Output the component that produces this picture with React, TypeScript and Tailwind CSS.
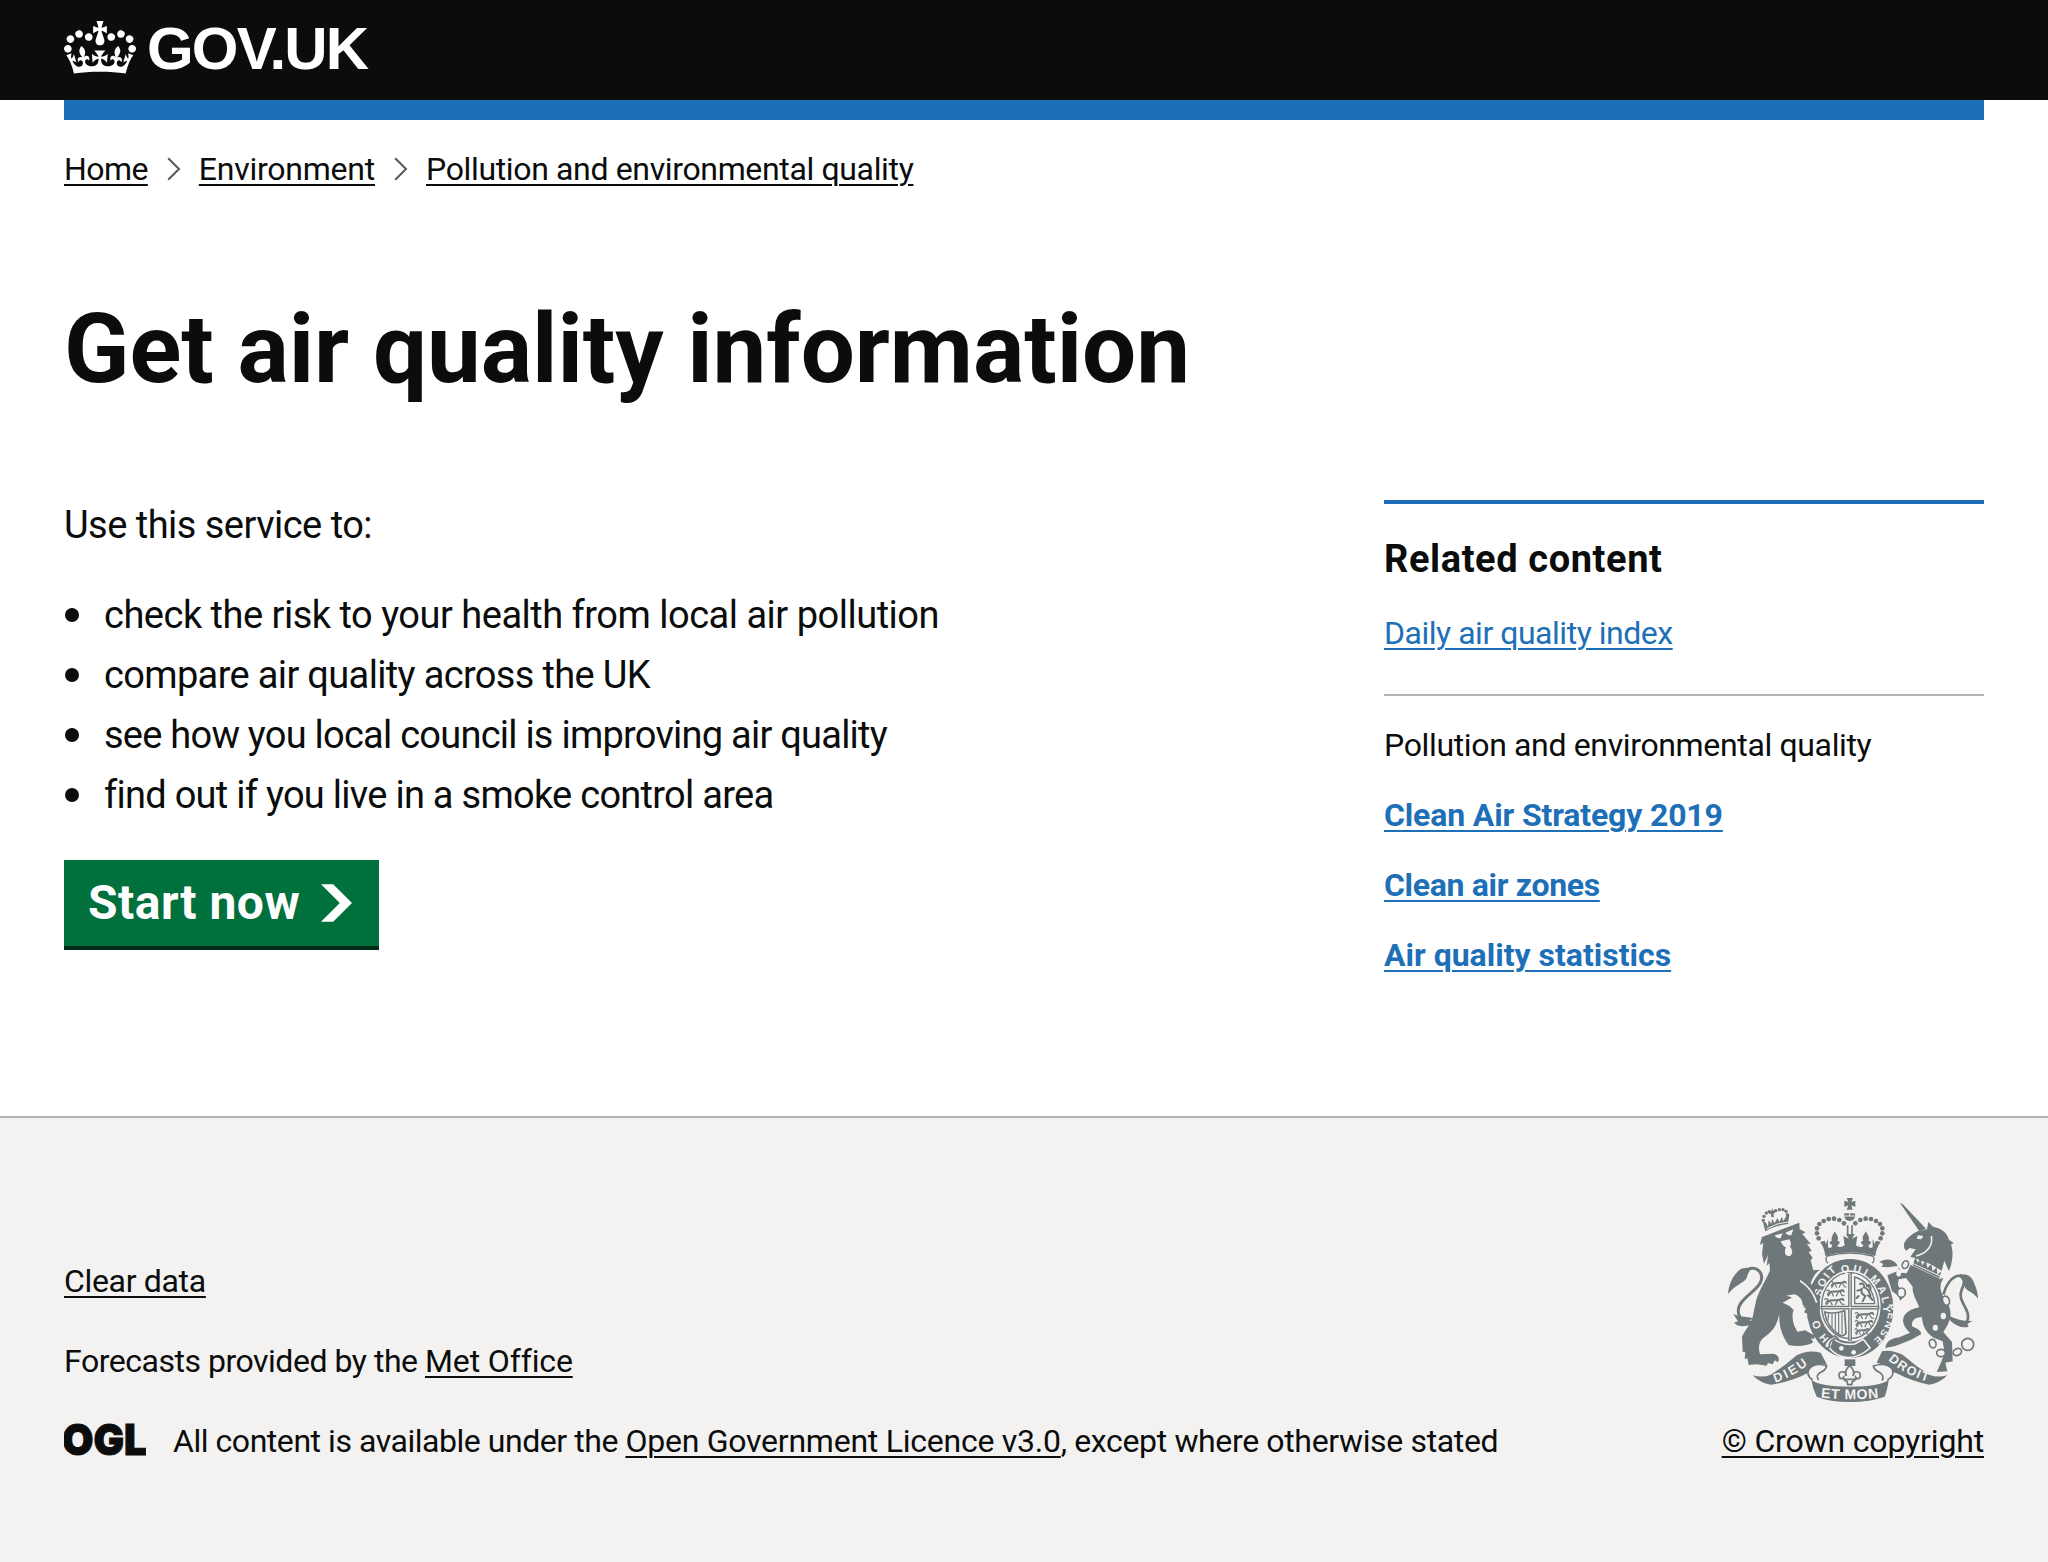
import type { ReactNode } from "react";

const ink = "text-[#0b0c0c]";
const underlined = "underline decoration-2 underline-offset-4";

function Crown() {
  return (
    <svg className="h-[53px] w-[72px] shrink-0" viewBox="0 0 132 97" fill="currentColor" aria-hidden="true">
      <path
        fillRule="evenodd"
        d="M25 30.2c3.5 1.5 7.7-.2 9.1-3.7 1.5-3.6-.2-7.8-3.9-9.2-3.6-1.4-7.6.3-9.1 3.9-1.4 3.5.3 7.5 3.9 9zM9 39.5c3.6 1.5 7.8-.2 9.2-3.7 1.5-3.6-.2-7.8-3.9-9.1-3.6-1.5-7.6.2-9.1 3.8-1.4 3.5.3 7.5 3.8 9zM4.4 57.2c3.5 1.5 7.7-.2 9.1-3.8 1.5-3.6-.2-7.7-3.9-9.1-3.5-1.5-7.6.3-9.1 3.8-1.4 3.5.3 7.6 3.9 9.1zm38.3-21.4c3.5 1.5 7.7-.2 9.1-3.8 1.5-3.6-.2-7.7-3.9-9.1-3.6-1.5-7.6.3-9.1 3.8-1.3 3.6.4 7.7 3.9 9.1zm64.4-5.6c-3.6 1.5-7.8-.2-9.1-3.7-1.5-3.6.2-7.8 3.8-9.2 3.6-1.4 7.7.3 9.2 3.9 1.3 3.5-.4 7.5-3.9 9zm15.9 9.3c-3.6 1.5-7.7-.2-9.1-3.7-1.5-3.6.2-7.8 3.7-9.1 3.6-1.5 7.7.2 9.2 3.8 1.5 3.5-.3 7.5-3.8 9zm4.7 17.7c-3.6 1.5-7.8-.2-9.2-3.8-1.5-3.6.2-7.7 3.9-9.1 3.6-1.5 7.7.3 9.2 3.8 1.3 3.5-.4 7.6-3.9 9.1zM89.3 35.8c-3.6 1.5-7.8-.2-9.2-3.8-1.4-3.6.2-7.7 3.9-9.1 3.6-1.5 7.7.3 9.2 3.8 1.4 3.6-.3 7.7-3.9 9.1zM69.7 17.7l8.9 4.7V9.3l-8.9 2.8c-.2-.3-.5-.6-.9-.9L72.4 0H59.6l3.5 11.2c-.3.3-.6.5-.9.9l-8.8-2.8v13.1l8.8-4.7c.3.3.6.7.9.9l-5 15.4v.1c-.2.8-.4 1.6-.4 2.4 0 4.1 3.1 7.5 7 8.1h.2c.3 0 .7.1 1 .1.4 0 .7 0 1-.1h.2c4-.6 7.1-4.1 7.1-8.1 0-.8-.1-1.7-.4-2.4V34l-5.1-15.4c.4-.2.7-.6 1-.9zM66 92.8c16.9 0 32.8 1.1 47.1 3.2 4-16.9 8.9-26.7 14-33.5l-9.6-3.4c1 4.9 1.1 7.2 0 10.2-1.5-1.4-3-4.3-4.2-8.7L108.6 76c2.8-2 5-3.2 7.5-3.3-4.4 9.4-10 11.9-13.6 11.2-4.3-.8-6.3-4.6-5.6-7.9 1-4.7 5.7-5.9 8-.5 4.3-8.7-3-11.4-7.6-8.8 7.1-7.2 7.9-13.5 2.1-21.1-8 6.1-8.1 12.3-4.5 20.8-4.7-5.4-12.1-2.5-9.5 6.2 3.4-5.2 7.9-2 7.2 3.1-.6 4.3-6.4 7.8-13.5 7.2-10.3-.9-10.9-8-11.2-13.8 2.5-.5 7.1 1.8 11 7.3L80.2 60c-4.1 4.4-8 5.3-12.3 5.4 1.4-4.4 8-11.6 8-11.6H55.5s6.4 7.2 7.9 11.6c-4.2-.1-8-1-12.3-5.4l1.4 16.4c3.9-5.5 8.5-7.7 10.9-7.3-.3 5.8-.9 12.8-11.1 13.8-7.2.6-12.9-2.9-13.5-7.2-.7-5 3.8-8.3 7.1-3.1 2.7-8.7-4.6-11.6-9.4-6.2 3.7-8.5 3.6-14.7-4.6-20.8-5.8 7.6-5 13.9 2.2 21.1-4.7-2.6-11.9.1-7.7 8.8 2.3-5.5 7.1-4.2 8.1.5.7 3.3-1.3 7.1-5.7 7.9-3.5.7-9-1.8-13.5-11.2 2.5.1 4.7 1.3 7.5 3.3l-4.7-15.4c-1.2 4.4-2.7 7.2-4.3 8.7-1.1-3-.9-5.3 0-10.2l-9.5 3.4c5 6.9 9.9 16.7 14 33.5 14.8-2.1 30.8-3.2 47.7-3.2z"
      />
    </svg>
  );
}

function Separator({ className }: { className: string }) {
  return (
    <svg className={`h-[24px] w-[14px] shrink-0 ${className}`} viewBox="0 0 14 24" fill="none" stroke="#505a5f" strokeWidth="2" aria-hidden="true">
      <path d="M1.2 1.2 12 12 1.2 22.8" />
    </svg>
  );
}

const G = "#6e777a";
const BG = "#f3f2f1";

/* Beads on the arches of the large crown. */
const beads: [number, number][] = [
  [432, 130], [418, 120], [402, 116], [386, 117], [371, 123], [358, 132], [351, 145], [351, 160], [356, 175],
  [466, 130], [481, 120], [497, 116], [513, 117], [528, 123], [540, 132], [547, 145], [547, 160], [542, 175],
];
const smallBeads: [number, number][] = [
  [190, 121], [192, 109], [199, 99], [208, 95], [227, 92], [238, 89], [249, 89], [258, 94], [262, 104],
];

function PassantLion({ x, y, w = 1 }: { x: number; y: number; w?: number }) {
  return (
    <g transform={`translate(${x} ${y}) scale(${w} 1)`} fill="none" stroke={G} strokeWidth="3.6" strokeLinecap="round">
      <path d="M4 4c6-5 12 2 6 6s-4 8 2 6" />
      <path d="M12 10c8-5 20-2 30-4 5-1 8-5 12-2" strokeWidth="6" />
      <path d="M50 2l6 6M14 12l-6 8M20 12l4 8M38 10l-5 10M45 9l5 9 6 1" />
    </g>
  );
}

function RoyalArms() {
  return (
    <svg className="h-[204px] w-[250px]" viewBox="84 54 750 612" aria-hidden="true">
      <defs>
        <path id="garter-top" d="M352 405A99 113 0 1 1 548 405" />
        <path id="garter-left" d="M388 476A97 112 0 0 1 353 395" />
        <path id="garter-left-up" d="M364 350A98 112 0 0 1 420 268" />
        <path id="garter-right" d="M537 298A100 118 0 0 1 500 492" />
        <path id="dieu" d="M226 608 Q285 588 334 545" />
        <path id="droit" d="M564 540 Q618 588 690 607" />
        <path id="mon" d="M356 652 Q450 664 546 652" />
      </defs>

      {/* Garter and shield */}
      <ellipse cx="450" cy="385" rx="130" ry="149" fill={G} />
      <ellipse cx="450" cy="378" rx="92" ry="107" fill={BG} />
      <ellipse cx="450" cy="377" rx="85" ry="99" fill="none" stroke={G} strokeWidth="4" />
      <path d="M450 276v206M362 383h176" stroke={G} strokeWidth="11" />
      <path d="M450 280v200M366 383h168" stroke={BG} strokeWidth="3" />
      <PassantLion x={388} y={302} w={0.9} />
      <PassantLion x={376} y={328} />
      <PassantLion x={370} y={354} w={1.1} />
      <PassantLion x={462} y={396} w={1.05} />
      <PassantLion x={462} y={420} w={1} />
      <PassantLion x={462} y={444} w={0.8} />
      {/* Rampant lion in its bordered quarter */}
      <path d="M464 291v80h60a78 90 0 0 0-60-80z" fill="none" stroke={G} strokeWidth="4" />
      <path d="M480 312c8-4 14 2 12 10 10 2 16 14 20 26m-26-22c-6 12 2 18 10 22l-8 16m16-18l14 14m-34-32l-12 4m4 16l-6 6m30-36c8-8 14 2 10 12" fill="none" stroke={G} strokeWidth="6" strokeLinecap="round" />
      {/* Harp */}
      <path d="M374 396c20 6 42 2 60-4l4 68c-8 10-16 8-20 4-24-14-40-38-44-68z" fill="none" stroke={G} strokeWidth="5" />
      <path d="M386 400l-2 22M396 401v42M406 400v52M416 399v62M426 397v66" stroke={G} strokeWidth="3.4" />
      <g fill={BG} fontFamily="'Liberation Sans', Arial, sans-serif" fontWeight="700" fontSize="34">
        <text fontSize="33"><textPath href="#garter-left-up" textLength="92">SOIT</textPath></text>
        <text fontSize="32"><textPath href="#garter-top" startOffset="157" textLength="74">QUI</textPath></text>
        <text fontSize="32"><textPath href="#garter-top" startOffset="246" textLength="112">MALY</textPath></text>
        <text fontSize="30"><textPath href="#garter-right" startOffset="80" textLength="122">PENSE</textPath></text>
        <text fontSize="32"><textPath href="#garter-left" startOffset="0" textLength="66">HO</textPath></text>
      </g>
      {/* Strap and buckle */}
      <path d="M398 474q26 24 66 18l26-14 20 26q-36 32-72 28-30-4-50-28z" fill={G} stroke={BG} strokeWidth="5" />
      <circle cx="424" cy="505" r="7" fill={BG} />
      <circle cx="461" cy="517" r="7" fill={BG} />
      <path d="M404 468c-20 8-30 20-30 32 6 8 16 4 14-6 2-12 10-18 24-20z" fill={BG} stroke={G} strokeWidth="5" />

      {/* Large crown */}
      <path d="M380 222c-8 12 0 30 4 30 44-20 88-20 132 0 6-2 14-18 6-30-46-18-98-18-142 0z" fill={BG} />
      <path d="M384 250c-8-6-8-18-2-22 46-12 90-12 136 0 6 6 6 16-2 22" fill="none" stroke={G} strokeWidth="4" />
      <path
        d="M376 228c-2-18-8-32-16-42l14-4 4 10 6-16v26c8 4 14 0 12-8-8 0-10-12 0-12-4-10 4-18 8-28 6 10 14 18 8 28 10 0 8 12 0 12 0 8 12 10 22 2l-4-28 16 8-8-14h26l-8 14 16-8-4 28c10 8 22 6 22-2-8 0-10-12 0-12-6-10 2-18 8-28 4 10 12 18 8 28 10 0 8 12 0 12-2 8 4 12 12 8v-26l6 16 4-10 14 4c-8 10-14 24-16 42-48-14-102-14-152 0z"
        fill={G}
      />
      <path d="M443 136v26M456 136v26" stroke={G} strokeWidth="5" />
      <path d="M432 106a17 17 0 1 0 34 0l-2-6h-30z" fill={G} />
      <path d="M430 108h38M449 90v18" stroke={BG} strokeWidth="3" />
      <path d="M440 54h19l-5 12 12-4v19l-12-5 4 13h-18l5-13-12 5V62l12 4z" fill={G} />
      {beads.map(([x, y]) => (
        <circle key={`${x}-${y}`} cx={x} cy={y} r="7" fill={G} />
      ))}

      {/* Lion tail */}
      <path d="M216 398c-30 30-82 42-98 10-18-44 44-66 62-98 16-32-10-52-36-42" fill="none" stroke={G} strokeWidth="9" />
      <path d="M84 342c2-24 12-54 34-72 12-8 26-8 36-4-6 6-12 18-14 28-8 16-30 16-56 48z" fill={G} />
      <path d="M100 402l16 6 44 6-14 10 14 6c-22 12-46 12-58-2l12-4z" fill={G} />
      {/* Lion body */}
      <path
        d="M184 172l20-8 94-36 1 20 18 9-10 5 26 31-12-2 14 21-9 5 12 16-6 8 8 30 20-2c-14 10-20 20-28 40l28 56-2 52-20 4 2-10-18 2 4-10-14-6 6-12-10-4c2-18-8-34-26-38l-24 4c20 4 34 14 38 26-20 16-22 34-14 62l10 20 24-4 28 16-2 10-10-2 8 12c-18 12-50 14-74 8-22-28-30-62-28-96-4 34-22 58-44 72-18 12-20 34-14 52l40-2c14 2 20 14 14 26l-10-6-6 12-14-4-4 8-30-4-24 2-4-20-8 2 2-20-8-2-2-44c8-20 24-34 32-60l10-48c10-34 30-62 42-92l-2-22-8 8 4-32-12 26-6-28 4-34-10 6c2-8 2-14 6-20z"
        fill={G}
      />
      <path d="M300 302c26 16 42 40 50 66" fill="none" stroke={BG} strokeWidth="5" />
      <path d="M224 166l24-6-6 14c-6 2-14 0-18-8zM256 158l24-10-6 18c-8 0-14-2-18-8z" fill={BG} />
      <path d="M242 184l26-6c6 10 6 16 2 22 12 14 6 28-4 28-12 0-14-14-8-26-8-2-12-10-16-18z" fill={BG} />
      <path d="M248 368l36-20 2 12 16 2-4 10 16 6-10 8 10 10-14 2 4 10c-8-2-12-12-20-14-8-12-20-20-36-26z" fill={BG} />
      {/* Lion crown */}
      <path d="M196 154l-8-32 10 6 6 12 2-20 8 12 2-16 8 14 8-16 6 12 8-16 4 14 10-18 8-2-4 28q-38 4-68 22z" fill={G} />
      <path d="M200 146q32-18 64-20" stroke={BG} strokeWidth="3" fill="none" />
      <path d="M216 84l3 8 8-3-2 10-5 2 2 10h-8l-1-9-6-1v-9l8 1z" fill={G} />
      {smallBeads.map(([x, y]) => (
        <circle key={`${x}-${y}`} cx={x} cy={y} r="5" fill={G} />
      ))}

      {/* Unicorn tail */}
      <path d="M730 344c6-26 24-56 50-58 18-2 14 26 4 46-14 34 38 62 14 98-10 12-30 0-52-20" fill="none" stroke={G} strokeWidth="8" />
      <path d="M776 290c14-12 36-6 44 14 8 20 14 30 14 52-12-18-26-20-36-30-10-12-6-28-22-36z" fill={G} />
      <path d="M734 400c24 14 50 26 84 22l-16 10 4 8c-30 8-54-12-72-40z" fill={G} />
      {/* Unicorn body */}
      <path d="M600 69l8 3 70 74-20 8z" fill={G} />
      <path
        d="M613 188c8-14 22-26 40-34l28-6 4-22 14 14c26 4 44 20 48 40l14 8-8 6c8 22 4 44 0 62l-6 18-14-32-8 30-34-20-60-22 16-22-18-4-10 8c-8-6-8-16-6-24z"
        fill={G}
      />
      <path d="M654 166l16 2-6 10-14-2z" fill={BG} />
      <path d="M694 168c6 30-14 52-46 60" fill="none" stroke={BG} strokeWidth="5" />
      <path
        d="M634 250l96 46c-18 24-4 50 10 70 20 26 12 60-10 90l26 30 2 58-22 4 6 26-32 2 12-26 12-30-6-36-26-10c-26-18-34-36-36-62-20-2-32 10-30 26 6 6 26 8 28 24l-32 18-46 18-30 6c2-20 20-30 42-32l32-14c-16-14-26-32-18-50 12-18 30-22 46-26-8-20-22-40-20-62l-20-26-22 4-2 18 18 34-12 12-4-14-20-14-14-48 38-16-8-12-28 4-20-2 6-8-12-6c18-12 40-10 52 6l10 26 20 2z"
        fill={G}
      />
      <path d="M641 232l90 48-8 18-92-44z" fill={BG} />
      <path d="M646 232l8 16 8-14 4 22 12-14 4 22 12-12 4 22 12-12 2 22 12-10-6 20-80-38z" fill={G} />
      <path d="M638 250l86 40" stroke={BG} strokeWidth="3" />
      {/* Chain */}
      <g fill={BG} stroke={G} strokeWidth="5">
        <ellipse cx="616" cy="254" rx="9" ry="12" transform="rotate(25 616 254)" />
        <ellipse cx="596" cy="280" rx="7" ry="10" stroke="none" />
        <ellipse cx="604" cy="338" rx="12" ry="14" />
        <ellipse cx="738" cy="362" rx="10" ry="14" transform="rotate(-20 738 362)" />
        <ellipse cx="730" cy="408" rx="8" ry="10" stroke="none" />
        <ellipse cx="706" cy="443" rx="8" ry="9" stroke="none" />
        <ellipse cx="698" cy="491" rx="10" ry="13" transform="rotate(-12 698 491)" />
        <ellipse cx="723" cy="519" rx="13" ry="11" />
        <ellipse cx="772" cy="516" rx="13" ry="10" transform="rotate(-25 772 516)" />
        <circle cx="803" cy="493" r="18" fill="none" />
      </g>

      {/* Pendant */}
      <path d="M434 538h32v20h-32z" fill={G} />
      <path
        d="M449 556c10 10 16 20 10 32 2-18 24-16 22 0-2 10-10 10-14 4 0 8-6 12-10 12l-2 10h-12l-2-10c-6 0-10-6-10-12-4 6-12 6-14-4-2-16 20-18 22 0-6-12 0-22 10-32z"
        fill={BG} stroke={G} strokeWidth="5"
      />
      <path d="M430 598h40" stroke={G} strokeWidth="5" />

      {/* Motto scroll */}
      <path d="M158 586q30 8 54-2 40-24 78-58 34-18 72-8l20 38q-20-8-36 6-10 8-24 18-50 26-110 34-30-4-54-28z" fill={G} />
      <path d="M742 586q-30 8-54-2-40-24-78-58-34-18-64-12l-16 34q14 2 34 18 12 10 26 14 50 26 98 34 30-4 54-28z" fill={G} />
      <path d="M338 600q-22-16-10-34 18-20 52-8-2 12-20 20-14 8-4 22" fill={BG} stroke={G} strokeWidth="5" />
      <path d="M562 600q24-12 14-34-20-20-56-8 2 12 20 20 14 10 6 24" fill={BG} stroke={G} strokeWidth="5" />
      <path d="M334 600q28 20 116 20t116-20q-4 30-12 50-44 16-104 16-62 0-100-16-12-24-16-50z" fill={G} />
      <g fill={BG} fontFamily="'Liberation Sans', Arial, sans-serif" fontWeight="700" fontSize="38">
        <text><textPath href="#dieu" textLength="112">DIEU</textPath></text>
        <text><textPath href="#droit" textLength="136">DROIT</textPath></text>
        <text fontSize="42"><textPath href="#mon" startOffset="6" textLength="174">ET MON</textPath></text>
      </g>
    </svg>
  );
}

const bullets: { text: string; tracking: string }[] = [
  { text: "check the risk to your health from local air pollution", tracking: "tracking-[-0.495px]" },
  { text: "compare air quality across the UK", tracking: "tracking-[-0.653px]" },
  { text: "see how you local council is improving air quality", tracking: "tracking-[-0.758px]" },
  { text: "find out if you live in a smoke control area", tracking: "tracking-[-0.725px]" },
];

const related: { text: string; tracking: string }[] = [
  { text: "Clean Air Strategy 2019", tracking: "tracking-[-0.143px]" },
  { text: "Clean air zones", tracking: "tracking-[-0.328px]" },
  { text: "Air quality statistics", tracking: "" },
];

function Link({ children, className = "" }: { children: ReactNode; className?: string }) {
  return (
    <a href="#" className={`${underlined} ${className}`}>
      {children}
    </a>
  );
}

export default function App() {
  return (
    <div className={`flex min-h-screen flex-col bg-white font-['Roboto',sans-serif] ${ink}`}>
      <header className="bg-[#0b0c0c] px-16 text-white">
        <a href="#" className="flex h-[100px] items-start">
          <span className="pt-[21px]">
            <Crown />
          </span>
          <span className="ml-[11px] pt-[16px] font-['Liberation_Sans',sans-serif] text-[60px] leading-[66px] font-bold tracking-[-1.8px]">
            GOV.UK
          </span>
        </a>
      </header>
      <div className="mx-16 h-5 bg-[#1d70b8]" />

      <nav className="mx-16 mt-[29px] flex h-10 items-center text-[32px] leading-10 whitespace-nowrap">
        <Link className="tracking-[-0.577px]">Home</Link>
        <Separator className="ml-[19px]" />
        <Link className="ml-[18px] tracking-[-0.233px]">Environment</Link>
        <Separator className="ml-[19px]" />
        <Link className="ml-[18px] tracking-[-0.351px]">Pollution and environmental quality</Link>
      </nav>

      <main className="mx-16 flex-1">
        <h1 className="mt-[110px] text-[96px] leading-[100px] font-bold tracking-[-0.06px]">Get air quality information</h1>
        <div className="mt-[101px] flex justify-between">
          <section>
            <p className="text-[38px] leading-[50px] tracking-[-0.525px]">Use this service to:</p>
            <ul className="mt-10 flex flex-col gap-[10px] text-[38px] leading-[50px]">
              {bullets.map((b) => (
                <li key={b.text} className="flex items-center">
                  <span className="mr-[25px] ml-px size-[14px] rounded-full bg-[#0b0c0c]" />
                  <span className={b.tracking}>{b.text}</span>
                </li>
              ))}
            </ul>
            <a
              href="#"
              className="mt-10 flex h-[90px] w-[315px] items-center border-b-4 border-[#002d18] bg-[#00703c] pl-6 text-[48px] leading-[48px] font-bold text-white"
            >
              <span className="tracking-[0.5px]">Start now</span>
              <svg className="ml-[21px] h-[38px] w-[31px]" viewBox="0 0 33 40" fill="currentColor" aria-hidden="true">
                <path d="M0 0h13l20 20-20 20H0l20-20z" />
              </svg>
            </a>
          </section>

          <aside className="w-[600px] border-t-4 border-[#1d70b8] pt-[30px] text-[32px] leading-10">
            <h2 className="text-[38px] leading-[50px] font-bold tracking-[0.6px]">Related content</h2>
            <p className="mt-[29px]">
              <Link className="tracking-[-0.478px] text-[#1d70b8]">Daily air quality index</Link>
            </p>
            <div className="mt-[41px] border-t-2 border-[#b1b4b6] pt-[29px]">
              <p className="tracking-[-0.351px]">Pollution and environmental quality</p>
              <ul className="mt-[30px] flex flex-col gap-[30px] font-bold text-[#1d70b8]">
                {related.map((r) => (
                  <li key={r.text}>
                    <Link className={r.tracking}>{r.text}</Link>
                  </li>
                ))}
              </ul>
            </div>
          </aside>
        </div>
      </main>

      <footer className="flex h-[446px] justify-between border-t-2 border-[#b1b4b6] bg-[#f3f2f1] px-16 text-[32px] leading-10">
        <div className="flex flex-col gap-10 pt-[143px]">
          <p>
            <Link className="tracking-[-0.329px]">Clear data</Link>
          </p>
          <p className="tracking-[-0.477px]">
            Forecasts provided by the <Link className="tracking-[-0.136px]">Met Office</Link>
          </p>
          <div className="flex">
            <svg className="mt-px h-[34px] w-[82px]" viewBox="0 0 82 34" aria-hidden="true">
              <text x="-2" y="33" fill="#0b0c0c" stroke="#0b0c0c" strokeWidth="1" fontFamily="Inter, sans-serif" fontWeight="900" fontSize="43" textLength="85" lengthAdjust="spacingAndGlyphs">
                OGL
              </text>
            </svg>
            <p className="ml-[27px] tracking-[-0.456px]">
              All content is available under the <Link className="tracking-[-0.248px]">Open Government Licence v3.0</Link>
              <span className="tracking-[-0.355px]">, except where otherwise stated</span>
            </p>
          </div>
        </div>
        <div className="flex flex-col items-center pt-[80px]">
          <RoyalArms />
          <Link className="mt-[19px] tracking-[-0.157px]">© Crown copyright</Link>
        </div>
      </footer>
    </div>
  );
}
